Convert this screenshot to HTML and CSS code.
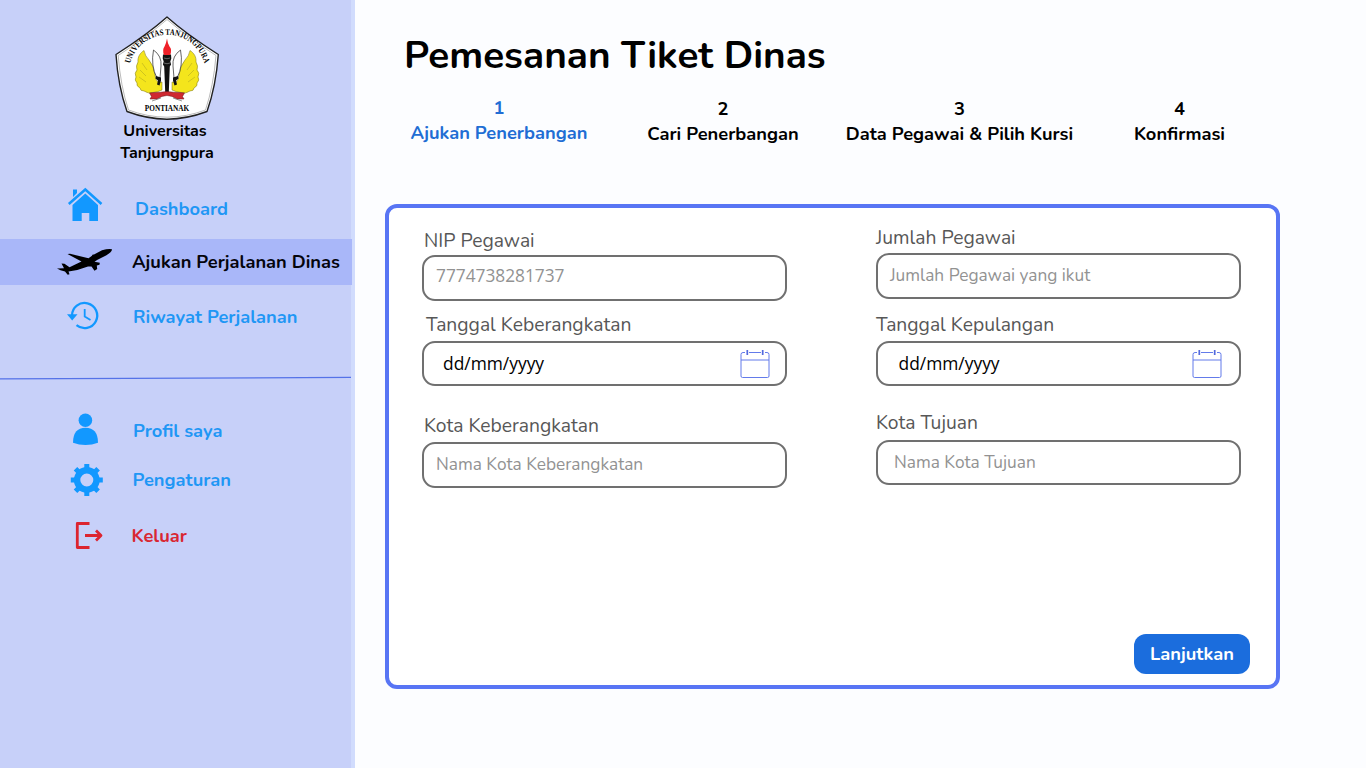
FILE: index.html
```html
<!DOCTYPE html>
<html lang="id">
<head>
<meta charset="utf-8">
<title>Pemesanan Tiket Dinas</title>
<link rel="stylesheet" href="styles.css">
</head>
<body>
<div class="app">
  <aside class="sidebar">
    <div class="brand">
      <svg class="logo" viewBox="114 15 106 106">
        <path d="M167 17Q186 34 218.300 54.500Q216 86 207 111.500Q187 119 167 119.200Q147 119 127 111.500Q118 86 116 54.500Q148 34 167 17Z" fill="#fff" stroke="#222" stroke-width="1.400" stroke-linejoin="round"/>
        <path d="M167 19.500Q186 36 216 55.500Q213.500 86 205.500 110Q187 117 167 117.200Q147 117 128.500 110Q120.500 86 118.200 55.500Q148 36 167 19.500Z" fill="none" stroke="#777" stroke-width=".5"/>
        <path id="arc" d="M130 63.500A38.500 38.500 0 0 1 204.500 63.500" fill="none"/>
        <text class="logo-text"><textPath href="#arc" textLength="101" lengthAdjust="spacingAndGlyphs">UNIVERSITAS TANJUNGPURA</textPath></text>
        <g fill="#f4e51c" stroke="#77701a" stroke-width=".5">
          <path d="M144 50.500C140 53 137.500 57 138 62Q135.500 66 137 70Q134 73 136 77Q134 80 137 83Q136 86 140 88Q140 91 144 91Q148 94 153 92.500Q158 92 162 90V82Q156 84 155 75Q154 66 149 60Q145 56 144 50.500Z"/>
          <path d="M190 50.500C194 53 196.500 57 196 62Q198.500 66 197 70Q200 73 198 77Q200 80 197 83Q198 86 194 88Q194 91 190 91Q186 94 181 92.500Q176 92 172 90V82Q178 84 179 75Q180 66 185 60Q189 56 190 50.500Z"/>
        </g>
        <path d="M142 63l5 7M140 70l6 6M139 77l7 5M192 63l-5 7M194 70l-6 6M195 77l-7 5" fill="none" stroke="#a9a122" stroke-width=".5"/>
        <path d="M153.500 50Q162 56 161 66L160 78L157 78Q150.500 66 153.500 50ZM180.500 50Q172 56 173 66L174 78L177 78Q183.500 66 180.500 50Z" fill="#fff" stroke="#222" stroke-width=".7"/>
        <path d="M156 76l5 1.500v3l-1.500 5-2.500-1 1-4-2.500-2zM178 76l-5 1.500v3l1.500 5 2.500-1-1-4 2.500-2z" fill="#111"/>
        <path d="M163 54.500h8l.3 4-1 3 .8 3-1.300 2-1 25.500h-3.600l-1-25.500-1.300-2 .8-3-1-3z" fill="#111"/>
        <path d="M164 58q3 1.500 6 0M164 63q3 1.500 6 0" stroke="#bbb" stroke-width=".5" fill="none"/>
        <path d="M167 38.500Q166 44 164.500 46.500Q162 50 164 55H170Q172.500 50 169.500 46.500Q167.500 43 167 38.500Z" fill="#ef2028"/>
        <path d="M149.500 93L154 92.500Q160 92.500 167 91.500Q174 92.500 180 92.500L184.500 93L182.500 96.500L184 99H177Q172 95.500 167 95.500Q162 95.500 157 99H150L151.500 96.500Z" fill="#cf2830" stroke="#651a20" stroke-width=".5"/>
        <path d="M152 101q6-2 9-3m21 3q-6-2-9-3" fill="none" stroke="#555" stroke-width=".6"/>
        <text class="logo-city" x="144.800" y="111.300" textLength="44.400" lengthAdjust="spacingAndGlyphs">PONTIANAK</text>
      </svg>
      <span class="brand-name">Universitas</span>
      <span class="brand-name second">Tanjungpura</span>
    </div>
    <nav class="menu">
      <a class="item home">
        <svg class="icon" viewBox="50 179 70 60" width="70" height="60"><g fill="#1298ff"><path d="M72.500 205L85.300 193.500L98 205V221H89.300V213H81.700V221H72.500Z"/><path d="M73 189.500H77V193L73 197Z"/></g><path d="M68.800 204L85.300 189.500L101.500 204" fill="none" stroke="#1298ff" stroke-width="2.500"/></svg>
        <span>Dashboard</span>
      </a>
      <a class="item active">
        <svg class="icon" viewBox="50 239 70 46" width="70" height="46"><path d="M57 268.500L64 268.300L61.500 263.500L64.500 263.800L69.500 267.200L81.500 261.500L67.500 254L70 253.800L88.500 258.300L92 255.800Q92 254.300 94 254.500L102 250.300Q108 248.500 112 249.200Q112 252 106 255.500L97.500 259.800L94.500 261.800L99.800 262.800L99.500 264.800L96.800 265.500L97.200 269L94.500 270.800L91.500 266.500L88 266.400Q79 270 68.500 271.500L69.500 274.300L67.700 274.800L65 271.600Q60 270.500 57 268.500Z"/></svg>
        <span>Ajukan Perjalanan Dinas</span>
      </a>
      <a class="item history">
        <svg class="icon" viewBox="50 285 70 64" width="70" height="64"><path d="M72 315.500A12.600 12.600 0 1 1 76.500 325.200" fill="none" stroke="#1298ff" stroke-width="2.300"/><path d="M67 314.200H77.500L72.200 320.500Z" fill="#1298ff"/><path d="M84.700 309V316.500L90.500 320" fill="none" stroke="#1298ff" stroke-width="1.800"/></svg>
        <span>Riwayat Perjalanan</span>
      </a>
      <svg class="divider" viewBox="0 349 352 57" width="352" height="57"><path d="M0 378.900L351 377.400" stroke="#5572e8" stroke-width="1.200"/></svg>
      <a class="item profile">
        <svg class="icon" viewBox="50 406 70 50" width="70" height="50"><g fill="#1298ff"><circle cx="85.400" cy="420.200" r="6.800"/><path d="M73 442.800Q73 428 85.500 427.800Q98 428 98 442.800Q92 445 85.500 445Q79 445 73 442.800Z"/></g></svg>
        <span>Profil saya</span>
      </a>
      <a class="item settings">
        <svg class="icon" viewBox="50 456 70 48" width="70" height="48"><g stroke="#1298ff"><circle cx="86.800" cy="480" r="9.700" fill="none" stroke-width="6.400"/><path d="M86.800 464v5M86.800 491v5M70.800 480h5M97.800 480h5M75.500 468.700l3.500 3.500M94.600 487.800l3.500 3.500M75.500 491.300l3.500-3.500M94.600 472.200l3.500-3.500" stroke-width="5"/></g></svg>
        <span>Pengaturan</span>
      </a>
      <a class="item logout">
        <svg class="icon" viewBox="50 504 70 64" width="70" height="64"><path d="M89.500 523.500H77.300V547.500H89.500M85 535.500H101M96 530.500L101 535.500L96 540.500" fill="none" stroke="#dc2430" stroke-width="2.800" stroke-linejoin="round"/></svg>
        <span>Keluar</span>
      </a>
    </nav>
  </aside>
  <main class="main">
    <h1 class="title">Pemesanan Tiket Dinas</h1>
    <ol class="steps">
      <li class="step current"><span>1</span><span>Ajukan Penerbangan</span></li>
      <li class="step"><span>2</span><span>Cari Penerbangan</span></li>
      <li class="step"><span>3</span><span>Data Pegawai &amp; Pilih Kursi</span></li>
      <li class="step"><span>4</span><span>Konfirmasi</span></li>
    </ol>
    <form class="card">
      <div class="columns">
        <div class="column">
          <div class="label l-nip">NIP Pegawai</div>
          <div class="field number"><span>7774738281737</span></div>
          <div class="label l-depart">Tanggal Keberangkatan</div>
          <div class="field date"><span>dd/mm/yyyy</span>
            <svg width="30" height="30" viewBox="0 -.5 30 30"><path d="M5 3H3Q1 3 1 5V26.500Q1 28 2.500 28H27.500Q29 28 29 26.500V5Q29 3 27 3H25M9 3H21M1 10.500H29" fill="none" stroke="#637bea"/><path d="M7.300 .5V5.500M22.700 .5V5.500" stroke="#5269dd" stroke-width="1.700"/></svg></div>
          <div class="label l-from">Kota Keberangkatan</div>
          <div class="field from"><span>Nama Kota Keberangkatan</span></div>
        </div>
        <div class="column right">
          <div class="label l-count">Jumlah Pegawai</div>
          <div class="field count"><span>Jumlah Pegawai yang ikut</span></div>
          <div class="label l-return">Tanggal Kepulangan</div>
          <div class="field date"><span>dd/mm/yyyy</span>
            <svg width="30" height="30" viewBox="0 -.5 30 30"><path d="M5 3H3Q1 3 1 5V26.500Q1 28 2.500 28H27.500Q29 28 29 26.500V5Q29 3 27 3H25M9 3H21M1 10.500H29" fill="none" stroke="#637bea"/><path d="M7.300 .5V5.500M22.700 .5V5.500" stroke="#5269dd" stroke-width="1.700"/></svg></div>
          <div class="label l-to">Kota Tujuan</div>
          <div class="field to"><span>Nama Kota Tujuan</span></div>
        </div>
      </div>
      <button class="next" type="button">Lanjutkan</button>
    </form>
  </main>
</div>
</body>
</html>
```
FILE: styles.css
```css
* { box-sizing: border-box; }
body { margin: 0; background: #fcfdff; color: #000; font-family: Nunito, "Open Sans", "Noto Sans", sans-serif; }
.app { display: flex; width: 1366px; height: 768px; overflow: hidden; white-space: nowrap; }
.sidebar { width: 355px; background: #c7d0f9; border-right: 4px solid #d1dcfd; flex: none; }
.brand { height: 179px; padding-top: 15px; width: 334px; display: flex; flex-direction: column; align-items: center; }
.logo { width: 106px; height: 106px; display: block; flex: none; }
.logo-text { font: bold 8.600px "Liberation Serif", serif; }
.logo-city { font: bold 8.300px "Liberation Serif", serif; }
.brand-name { font-size: 16.100px; font-weight: 700; line-height: 22px; margin: -1px 4px 0 0; }
.brand-name.second { margin: 0; }
.item { display: flex; align-items: center; padding-left: 50px; font-size: 18.300px; font-weight: 700; color: #1f97f5; }
.item .icon { flex: none; display: block; }
.home { height: 60px; }
.home span { margin-left: 15px; }
.active { height: 46px; width: 352px; background: #a9b7f9; color: #05050c; }
.active span { margin-left: 12px; }
.history { height: 64px; }
.history span { margin-left: 13px; }
.divider { display: block; }
.profile { height: 50px; }
.profile span { margin-left: 13px; }
.settings { height: 48px; }
.settings span { margin-left: 12.500px; }
.logout { height: 64px; color: #d92632; }
.logout span { margin-left: 11.500px; }
.main { flex: 1; padding: 30px 86px 0 30px; }
.title { margin: 0 0 0 19px; height: 66px; padding-top: 1px; font-size: 38.700px; line-height: 50px; font-weight: 700; }
.steps { list-style: none; margin: 0; padding: 0; height: 108px; display: flex; font-size: 18.300px; font-weight: 700; line-height: 25px; }
.step { display: flex; flex-direction: column; align-items: center; width: 220px; padding-top: 1px; }
.step:nth-child(3) { width: 253px; }
.step:nth-child(4) { width: 187px; }
.step.current { color: #216dd4; width: 228px; padding-top: 0; }
.card { width: 895px; height: 485px; border: 4px solid #5875f4; border-radius: 12px; background: #fff; display: flex; flex-direction: column; padding: 18px 26px 11px 33px; }
.columns { display: flex; gap: 89px; flex: 1; }
.column { width: 365px; }
.label { font-size: 19.300px; line-height: 29px; height: 29px; color: #575757; padding-left: 2px; }
.field { height: 46px; border: 2px solid #707070; border-radius: 13px; display: flex; align-items: center; padding: 0 12px 4px; font-size: 17.300px; color: #929292; }
.number { font-family: "Open Sans", sans-serif; padding-bottom: 6px; }
.date { height: 45px; color: #000; font-size: 17.400px; padding: 0 15px 0 19px; font-family: "Open Sans", sans-serif; justify-content: space-between; }
.date span { padding-bottom: 2px; }
.l-depart { height: 40px; padding: 9px 0 0 4px; }
.l-from { height: 56px; padding-top: 25px; }
.right .label { padding-left: 0; }
.right .l-count { height: 27px; line-height: 23px; }
.right .l-return { height: 42px; padding-top: 11px; }
.right .l-to { height: 54px; padding-top: 22px; }
.right .date { padding-left: 20.500px; padding-right: 17px; }
.count { padding-left: 12px; padding-bottom: 2px; }
.from { padding-bottom: 2px; }
.to { padding-left: 16px; padding-bottom: 0; height: 45px; }
.next { align-self: flex-end; flex: none; width: 116px; height: 40px; border: 0; padding: 0; border-radius: 12px; background: #1b6ddd; color: #fff; font: 700 18.300px Nunito, "Open Sans", sans-serif; }
```
